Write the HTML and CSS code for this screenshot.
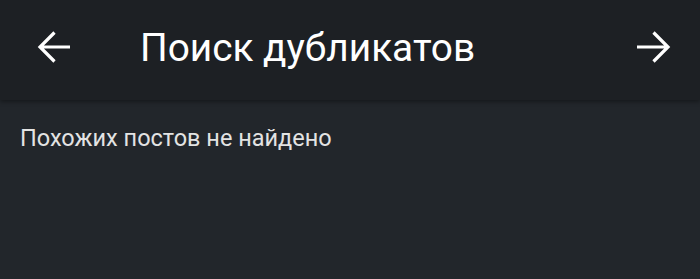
FILE: index.html
```html
<!DOCTYPE html>
<html lang="ru">
<head>
<meta charset="utf-8">
<link rel="stylesheet" href="styles.css">
</head>
<body>
<header class="bar">
  <button class="icon-btn" aria-label="Назад">
    <svg viewBox="0 0 48 48" width="48" height="48"><path d="M40 21H10M24.5 6.5L10 21l14.5 14.5" fill="none" stroke="#fff" stroke-width="3.2"/></svg>
  </button>
  <h1 class="title">Поиск дубликатов</h1>
  <button class="icon-btn" aria-label="Вперёд">
    <svg viewBox="0 0 48 48" width="48" height="48"><path d="M7 21h30M23.5 6.5L38 21 23.5 35.5" fill="none" stroke="#fff" stroke-width="3.2"/></svg>
  </button>
</header>
<main class="content">
  <p class="empty">Похожих постов не найдено</p>
</main>
</body>
</html>
```
FILE: styles.css
```css
html, body {
  margin: 0;
  padding: 0;
  height: 100%;
}
body {
  background: #22262b;
  font-family: Roboto, "Noto Sans", sans-serif;
  color: #e6e6e6;
}
.bar {
  height: 100px;
  background: #1d2024;
  display: flex;
  align-items: center;
  padding: 0 22px 0 30px;
  box-shadow: 0 2px 4px rgba(0,0,0,0.35);
  position: relative;
}
.icon-btn {
  background: none;
  border: 0;
  padding: 0;
  width: 48px;
  height: 48px;
  display: flex;
  cursor: pointer;
}
.title {
  flex: 1;
  margin: 0 0 3px 62px;
  font-size: 38.8px;
  font-weight: 400;
  color: #ffffff;
  line-height: 1;
}
.content {
  padding: 24px 20px;
}
.empty {
  margin: 0;
  font-size: 23.5px;
  line-height: 1.2;
  color: #e3e3e3;
}
```
